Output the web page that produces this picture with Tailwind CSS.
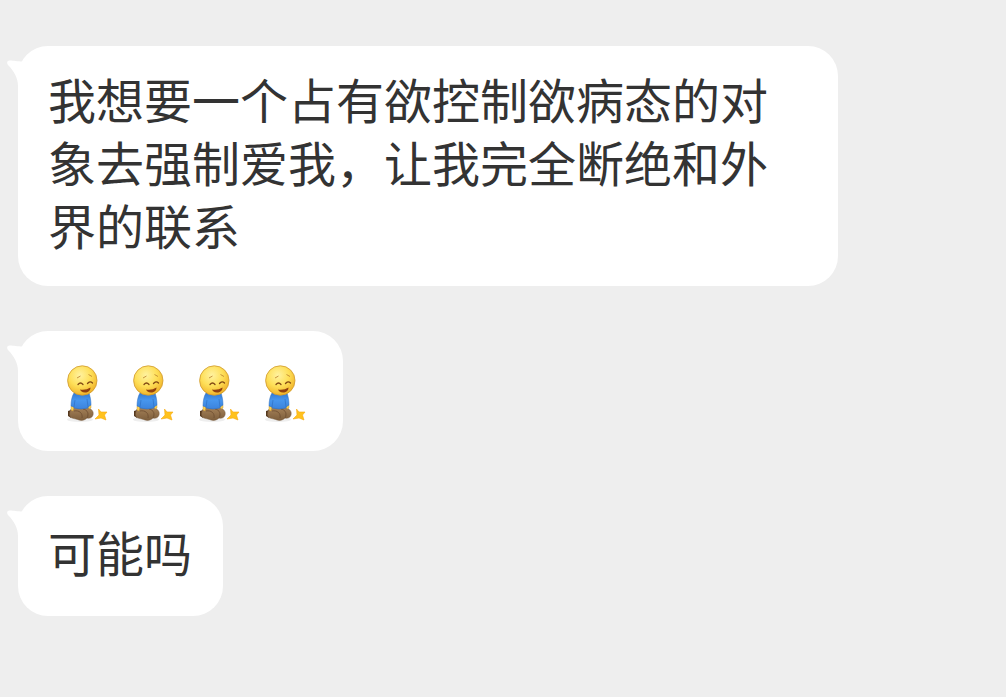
<!DOCTYPE html>
<html lang="zh-CN">
<head>
<meta charset="utf-8">
<meta name="viewport" content="width=device-width, initial-scale=1">
<title>聊天</title>
<script src="https://cdn.jsdelivr.net/npm/@tailwindcss/browser@4"></script>
</head>
<body class="min-h-screen bg-[#eeeeee] font-['Noto_Sans_CJK_SC',sans-serif] text-[48px] leading-[63px] text-[#333333]">
<svg class="absolute size-0" aria-hidden="true">
  <defs>
    <radialGradient id="face" cx="42%" cy="32%" r="68%">
      <stop offset="0" stop-color="#fff2a0"/><stop offset=".55" stop-color="#fedf58"/><stop offset="1" stop-color="#f1b42a"/>
    </radialGradient>
    <linearGradient id="shirt" x1="0" y1="0" x2="0" y2="1">
      <stop offset="0" stop-color="#3478d0"/><stop offset=".45" stop-color="#4796ee"/><stop offset="1" stop-color="#3c83dc"/>
    </linearGradient>
    <linearGradient id="legs" x1="0" y1="0" x2="0" y2="1">
      <stop offset="0" stop-color="#a68259"/><stop offset="1" stop-color="#7d5e3c"/>
    </linearGradient>
    <symbol id="tail" viewBox="0 0 24 40">
      <path fill="#fff" d="M24 15.5L16 15.5C10 15.5 7 14.5 2.5 14.5C0 14.5 -.5 17 1 19C7 25 11 32 11 40H24Z"/>
    </symbol>
    <symbol id="kneel" viewBox="0 0 66 66">
      <ellipse cx="31" cy="58.5" rx="13" ry="2.5" fill="#eeeeee"/>
      <path d="M22 49L19 50V55L22 57Z" fill="#55391f"/>
      <path d="M22 48C20 52 20 56 23 57C26 58 28 58 30 59C33 60 36 59 38 57C42 58 45 55 44 51C43 48 39 46 35 46H24Z" fill="url(#legs)" stroke="#76583a" stroke-width=".5"/>
      <path d="M25 50C30 49 34 52 33 57M34 48C39 49 40 53 38 57" fill="none" stroke="#67482d" stroke-width=".7"/>
      <path d="M22 45V49L24 50L25 46ZM39 45L40 48L42 47V44Z" fill="#fbd153" stroke="#c38f2d" stroke-width=".4"/>
      <path d="M25 32C23 35 22 40 22 45L25 46V47Q32 49 39 47V46L42 44C42 39 41 35 40 32Z" fill="url(#shirt)" stroke="#2d6cbd" stroke-width=".5"/>
      <path d="M26 39L25 46M38 38L39 46" stroke="#2d6cbd" stroke-width=".6"/>
      <circle cx="33.3" cy="19.5" r="14.7" fill="url(#face)" stroke="#cf992e" stroke-width=".8"/>
      <path d="M28 17L31.5 15M39.5 13.5L43 15.5" fill="none" stroke="#b77d2d" stroke-width=".8"/>
      <path d="M29 23.5Q31.5 20.5 34 23.5M38.5 22.5Q41 19.5 43.5 22" fill="none" stroke="#824914" stroke-width="1.3" stroke-linecap="round"/>
      <path d="M31 28.5Q37 29.5 41.5 26.5C41.5 30 39 31.5 36 31.5C33 31.5 31.5 30 31 28.5Z" fill="#92410f"/>
      <path d="M49.5 48L52 51L58 51L55.5 54L57 59L52 57L46 58L50 54Z" fill="#ffc21d" stroke="#f6a90f" stroke-width=".6"/>
    </symbol>
  </defs>
</svg>
<main class="flex flex-col items-start gap-[45px] pt-[46px] pr-4 pb-20 pl-[18px]">
  <article class="relative max-w-[820px] rounded-[30px] bg-white pr-[31px] pl-[30px] pt-[21px] pb-[30px]">
    <svg class="absolute top-0 -left-[11px] h-10 w-6" aria-hidden="true"><use href="#tail"/></svg>
    <p>我想要一个占有欲控制欲病态的对象去强制爱我，让我完全断绝和外界的联系</p>
  </article>
  <article class="relative rounded-[30px] bg-white pr-[30px] pl-[31px] pt-[30px] pb-[24px]">
    <svg class="absolute top-0 -left-[11px] h-10 w-6" aria-hidden="true"><use href="#tail"/></svg>
    <div class="flex">
      <svg class="size-[66px]" role="img" aria-label="跪"><use href="#kneel"/></svg>
      <svg class="size-[66px]" role="img" aria-label="跪"><use href="#kneel"/></svg>
      <svg class="size-[66px]" role="img" aria-label="跪"><use href="#kneel"/></svg>
      <svg class="size-[66px]" role="img" aria-label="跪"><use href="#kneel"/></svg>
    </div>
  </article>
  <article class="relative rounded-[30px] bg-white pr-[31px] pl-[30px] pt-[24px] pb-[33px]">
    <svg class="absolute top-0 -left-[11px] h-10 w-6" aria-hidden="true"><use href="#tail"/></svg>
    <p>可能吗</p>
  </article>
</main>
</body>
</html>
